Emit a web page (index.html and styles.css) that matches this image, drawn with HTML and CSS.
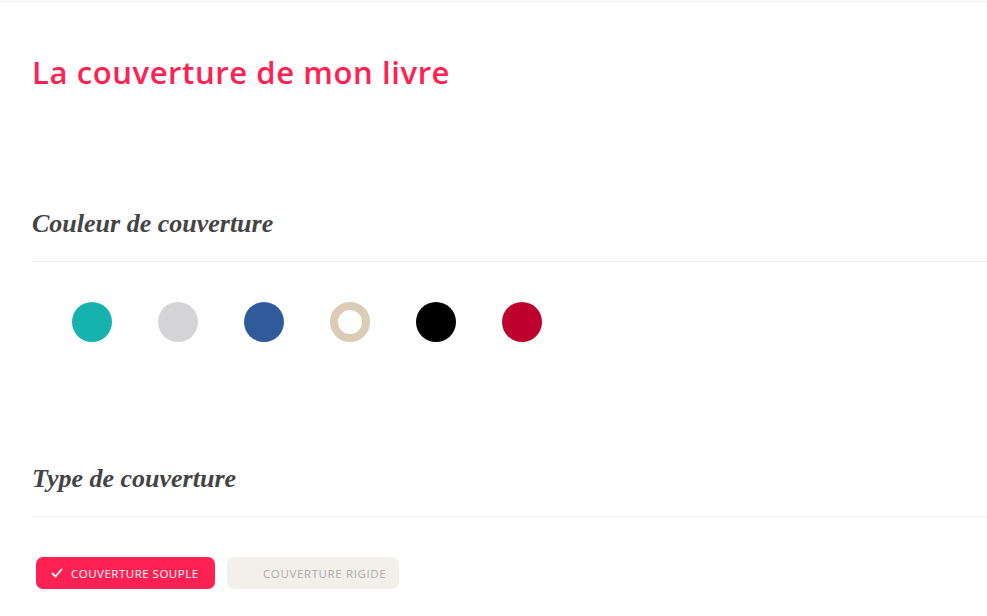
FILE: index.html
```html
<!DOCTYPE html>
<html lang="fr">
<head>
<meta charset="utf-8">
<title>La couverture de mon livre</title>
<link rel="stylesheet" href="styles.css">
</head>
<body>
<div class="page">
  <h1 class="title">La couverture de mon livre</h1>

  <section class="section">
    <h2 class="section-title">Couleur de couverture</h2>
    <div class="swatches">
      <span class="swatch teal"></span>
      <span class="swatch grey"></span>
      <span class="swatch blue"></span>
      <span class="swatch beige selected"></span>
      <span class="swatch black"></span>
      <span class="swatch red"></span>
    </div>
  </section>

  <section class="section type">
    <h2 class="section-title">Type de couverture</h2>
    <div class="options">
      <button class="option active">
        <svg class="check" viewBox="0 0 12 12" width="12" height="12"><path d="M1.5 6.5 L4.5 9.5 L10.5 2.5" fill="none" stroke="#fff" stroke-width="1.8" stroke-linecap="round" stroke-linejoin="round"/></svg>
        <span>Couverture souple</span>
      </button>
      <button class="option">Couverture rigide</button>
    </div>
  </section>
</div>
</body>
</html>
```

FILE: styles.css
```css
html, body {
  margin: 0;
  padding: 0;
  background: #fff;
}

.page {
  margin-top: 1px;
  border-top: 1px solid #eeeeee;
  padding-left: 32px;
  font-family: "Open Sans", "Liberation Sans", sans-serif;
}

.title {
  margin: 0;
  padding-top: 49px;
  font-size: 31px;
  line-height: 42px;
  font-weight: 600;
  color: #ff2152;
  letter-spacing: 0.6px;
}

.section {
  margin-top: 112px;
}

.section-title {
  margin: 0;
  font-family: "Liberation Serif", "DejaVu Serif", serif;
  font-style: italic;
  font-weight: bold;
  font-size: 26px;
  line-height: 32px;
  color: #444444;
  padding-top: 3px;
  padding-bottom: 21px;
  border-bottom: 1px solid #eeeeee;
  letter-spacing: 0px;
}

.swatches {
  display: flex;
  gap: 46px;
  padding: 40px 0 0 40px;
}

.swatch {
  width: 40px;
  height: 40px;
  border-radius: 50%;
  box-sizing: border-box;
  display: block;
}

.teal { background: #16b2ae; }
.grey { background: #d4d4d6; }
.blue { background: #2f5b9d; }
.beige { background: #fff; border: 8px solid #dbcdb5; }
.black { background: #000000; }
.red { background: #bd002d; }

.type {
  margin-top: 118px;
}

.options {
  display: flex;
  gap: 12px;
  padding: 40px 0 0 4px;
}

.option {
  display: flex;
  align-items: center;
  gap: 8px;
  height: 32px;
  padding: 0;
  border: none;
  border-radius: 7px;
  font-family: "Open Sans", "Liberation Sans", sans-serif;
  font-size: 11.5px;
  text-transform: uppercase;
  letter-spacing: 0.5px;
  cursor: pointer;
  justify-content: flex-start;
}

.option.active {
  width: 179px;
  background: #ff2152;
  color: #ffffff;
  padding-left: 15px;
}

.option:not(.active) {
  width: 172px;
  background: #f3f0eb;
  color: #ababab;
  padding-left: 36px;
  letter-spacing: 0.62px;
}

.check {
  display: block;
}
```
